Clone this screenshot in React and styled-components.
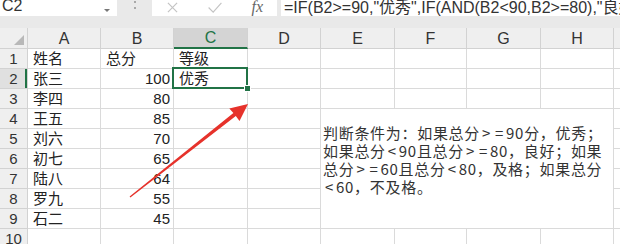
import styled, { createGlobalStyle } from "styled-components";

const GlobalStyle = createGlobalStyle`
  html, body {
    margin: 0;
    padding: 0;
    background: #fff;
    overflow: hidden;
  }
  body {
    font-family: "Liberation Sans", "Noto Sans CJK SC", sans-serif;
    color: #222;
  }
`;

const COLS = ["A", "B", "C", "D", "E", "F", "G", "H", ""];
const SELECTED_COL = "C";
const SELECTED_ROW = 2;

const data = [
  ["姓名", "总分", "等级"],
  ["张三", 100, "优秀"],
  ["李四", 80],
  ["王五", 85],
  ["刘六", 70],
  ["初七", 65],
  ["陆八", 64],
  ["罗九", 55],
  ["石二", 45],
  [],
];

// the note box sits over E4:H9
const inNote = (row, col) => row >= 4 && row <= 9 && col >= 4 && col <= 7;

const App = () => {
  return (
    <Page>
      <GlobalStyle />
      <Toolbar>
        <NameBox>
          <span>C2</span>
          <Caret />
        </NameBox>
        <Grip>
          <i />
          <i />
        </Grip>
        <FxBox>
          <ToolIcon viewBox="0 0 12 12">
            <path d="M1 1 L11 11 M11 1 L1 11" />
          </ToolIcon>
          <ToolIcon viewBox="0 0 16 12" $wide>
            <path d="M1 6 L6 11 L15 1" />
          </ToolIcon>
          <Fx>fx</Fx>
        </FxBox>
        <FormulaInput>=IF(B2&gt;=90,"优秀",IF(AND(B2&lt;90,B2&gt;=80),"良好",IF(AND(B2&gt;=60,B2&lt;80),"及格","不及格")))</FormulaInput>
      </Toolbar>
      <Band />
      <Sheet>
        <Corner>
          <svg width="10" height="10" viewBox="0 0 10 10">
            <polygon points="10,0 10,10 0,10" fill="#b8b8b8" />
          </svg>
        </Corner>
        {COLS.map((c, i) => (
          <ColHead key={"h" + i} $active={c === SELECTED_COL}>
            {c}
          </ColHead>
        ))}
        {data.map((row, r) => {
          const rowNo = r + 1;
          return [
            <RowHead key={"r" + rowNo} $active={rowNo === SELECTED_ROW}>
              {rowNo}
            </RowHead>,
            ...COLS.map((c, ci) => {
              if (inNote(rowNo, ci)) return null;
              const v = row[ci];
              return (
                <Cell
                  key={rowNo + "-" + ci}
                  $num={typeof v === "number"}
                  $selected={rowNo === SELECTED_ROW && c === SELECTED_COL}
                >
                  {v}
                </Cell>
              );
            }),
          ];
        })}
        <Note>
          <Line>
            判断条件为：如果总分<Op>&gt;</Op><Op>=</Op>90分，优秀；
          </Line>
          <Line>
            如果总分<Op>&lt;</Op>90且总分<Op>&gt;</Op><Op>=</Op>80，良好；如果
          </Line>
          <Line>
            总分<Op>&gt;</Op><Op>=</Op>60且总分<Op>&lt;</Op>80，及格；如果总分
          </Line>
          <Line>
            <Op>&lt;</Op>60，不及格。
          </Line>
        </Note>
      </Sheet>
      <Arrow viewBox="0 0 620 244" width="620" height="244">
        <polygon
          points="130.4,197.6 235.8,116.1 239.5,121 248,104 229.3,108.4 233.4,112.9 129.6,196.4"
          fill="#e6322b"
        />
      </Arrow>
    </Page>
  );
};

const Page = styled.div`
  position: relative;
  width: 620px;
  height: 244px;
  overflow: hidden;
  background: #fff;
`;

const Toolbar = styled.div`
  display: flex;
  align-items: flex-start;
  height: 21px;
  margin-top: -4px;
  background: #e9e9e9;
`;

const WhiteBox = styled.div`
  height: 20px;
  background: #fff;
  display: flex;
  align-items: center;
  box-sizing: border-box;
`;

const NameBox = styled(WhiteBox)`
  width: 117px;
  padding: 0 7px 0 2px;
  justify-content: space-between;
  font-size: 16px;
  color: #333;
`;

const Caret = styled.span`
  width: 0;
  height: 0;
  margin-top: 9px;
  border-left: 3px solid transparent;
  border-right: 3px solid transparent;
  border-top: 3px solid #777;
`;

const Grip = styled.div`
  width: 35px;
  display: flex;
  flex-direction: column;
  align-items: center;
  gap: 4px;
  padding-top: 5px;

  i {
    width: 2px;
    height: 2px;
    background: #a8a8a8;
  }
`;

const FxBox = styled(WhiteBox)`
  width: 125px;
  padding: 0 14px 0 15px;
  justify-content: space-between;
`;

const ToolIcon = styled.svg`
  width: ${(p) => (p.$wide ? "16px" : "11px")};
  height: 11px;
  margin-top: 2px;
  fill: none;
  stroke: #c4c4c4;
  stroke-width: 1.3;
`;

const Fx = styled.span`
  font-family: "Liberation Serif", serif;
  font-style: italic;
  font-size: 16px;
  color: #666;
  margin-top: 2px;
`;

const FormulaInput = styled(WhiteBox)`
  flex: 1;
  margin-left: 4px;
  padding-left: 3px;
  font-size: 16px;
  color: #333;
  white-space: nowrap;
  overflow: hidden;
`;

const Band = styled.div`
  height: 11px;
  background: #e9e9e9;
`;

const Sheet = styled.div`
  display: grid;
  grid-template-columns: 28px 73px 73px 74px 73px 74px 72px 74px 73px 1fr;
  grid-template-rows: 21px;
  grid-auto-rows: 20px;
  font-size: 15px;
`;

const HeadBase = styled.div`
  box-sizing: border-box;
  background: #efefef;
  border-right: 1px solid #d2d2d2;
  border-bottom: 1px solid #d2d2d2;
  color: #333;
  display: flex;
  align-items: center;
  justify-content: center;
`;

const Corner = styled(HeadBase)`
  align-items: flex-end;
  justify-content: flex-end;
  padding: 0 3px 3px 0;
`;

const ColHead = styled(HeadBase)`
  font-size: 16px;
  padding-top: 1px;
  background: ${(p) => (p.$active ? "#d4d4d4" : "#efefef")};
  color: ${(p) => (p.$active ? "#217346" : "#333")};
  border-bottom: ${(p) => (p.$active ? "2px solid #217346" : "1px solid #d2d2d2")};
`;

const RowHead = styled(HeadBase)`
  font-size: 15px;
  background: ${(p) => (p.$active ? "#e0e0e0" : "#efefef")};
  box-shadow: ${(p) => (p.$active ? "inset -2px 0 0 #217346" : "none")};
`;

const Cell = styled.div`
  position: relative;
  box-sizing: border-box;
  border-right: 1px solid #dadada;
  border-bottom: 1px solid #dadada;
  padding: 0 3px 0 5px;
  line-height: 19px;
  white-space: nowrap;
  text-align: ${(p) => (p.$num ? "right" : "left")};
  color: #222;

  ${(p) =>
    p.$selected &&
    `
    z-index: 2;
    &::after {
      content: "";
      position: absolute;
      left: -2px;
      top: -2px;
      right: -1px;
      bottom: -1px;
      border: 2px solid #217346;
    }
    &::before {
      content: "";
      position: absolute;
      right: -4px;
      bottom: -4px;
      width: 5px;
      height: 5px;
      background: #217346;
      border: 1px solid #fff;
      z-index: 1;
    }
  `}
`;

const Note = styled.div`
  grid-column: 6 / 10;
  grid-row: 5 / 11;
  box-sizing: border-box;
  background: #fff;
  border-right: 1px solid #dadada;
  border-bottom: 1px solid #dadada;
  padding: 15px 0 0 2px;
  font-family: "Noto Sans CJK SC", sans-serif;
  font-size: 15px;
  letter-spacing: 0.7px;
  color: #333;
  white-space: nowrap;
`;

const Line = styled.div`
  height: 18px;
  line-height: 18px;
`;

const Op = styled.span`
  display: inline-block;
  padding: 0 2px;
`;

const Arrow = styled.svg`
  position: absolute;
  left: 0;
  top: 0;
  pointer-events: none;
`;

export default App;
